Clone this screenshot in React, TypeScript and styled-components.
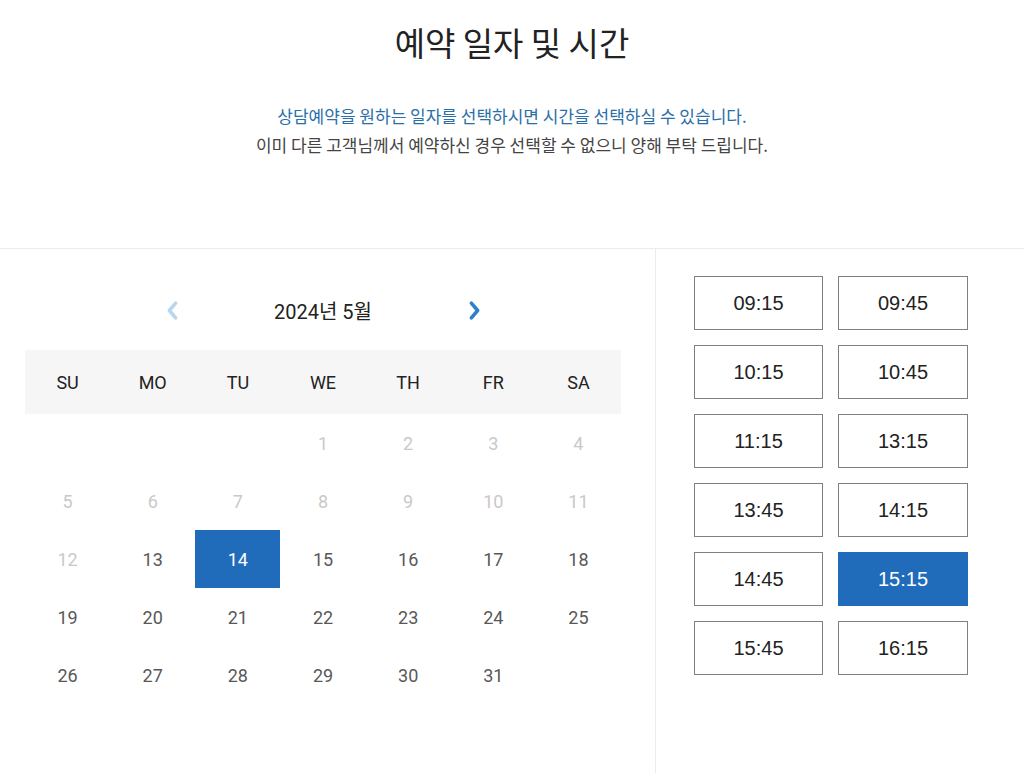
import React from "react";
import styled, { createGlobalStyle, css } from "styled-components";

const Global = createGlobalStyle`
  html, body { margin: 0; padding: 0; background: #fff; }
  body { font-family: "Noto Sans CJK KR", "Noto Sans", sans-serif; color: #222; }
  * { box-sizing: border-box; }
`;

const Page = styled.div`
  width: 1024px;
  height: 773px;
  overflow: hidden;
`;

const Intro = styled.header`
  height: 249px;
  padding-top: 18px;
  text-align: center;
  border-bottom: 1px solid #ececec;
`;

const Title = styled.h1`
  margin: 0;
  font-size: 33px;
  line-height: 48px;
  font-weight: 400;
  color: #222;
`;

const Lead = styled.p`
  margin: 35px 0 0;
  font-size: 17px;
  line-height: 29px;
  color: #444;
`;

const Accent = styled.span`
  color: #2a6fa8;
`;

const Main = styled.div`
  display: grid;
  grid-template-columns: 655px 1fr;
  height: 524px;
`;

const CalendarPane = styled.section`
  padding: 41px 0 0 25px;
`;

const Calendar = styled.div`
  width: 596px;
`;

const Nav = styled.div`
  display: flex;
  align-items: center;
  justify-content: center;
  height: 40px;
  margin-bottom: 20px;
`;

const Arrow = styled.button<{ $dim?: boolean }>`
  width: 20px;
  height: 24px;
  padding: 0;
  border: 0;
  background: none;
  display: flex;
  align-items: center;
  justify-content: center;
  color: ${(p) => (p.$dim ? "#b9d6f0" : "#2f80cc")};
`;

const Month = styled.div`
  width: 282px;
  text-align: center;
  font-family: Roboto, "Noto Sans CJK KR", sans-serif;
  font-size: 20px;
  color: #222;
`;

const Grid = styled.div`
  display: grid;
  grid-template-columns: repeat(7, 1fr);
`;

const HeadRow = styled(Grid)`
  height: 64px;
  background: #f6f6f6;
`;

const HeadCell = styled.div`
  display: flex;
  align-items: center;
  justify-content: center;
  font-family: Roboto, sans-serif;
  font-size: 18px;
  color: #222;
`;

const Day = styled.div<{ $muted?: boolean; $selected?: boolean }>`
  height: 58px;
  display: flex;
  align-items: center;
  justify-content: center;
  font-family: Roboto, sans-serif;
  font-size: 18px;
  color: ${(p) => (p.$muted ? "#c9c9c9" : "#585858")};
  ${(p) =>
    p.$selected &&
    css`
      background: #216bbb;
      color: #fff;
    `}
`;

const TimePane = styled.section`
  border-left: 1px solid #ececec;
  padding: 27px 0 0 38px;
`;

const Times = styled.div`
  display: grid;
  grid-template-columns: 129px 130px;
  column-gap: 15px;
  row-gap: 15px;
`;

const Slot = styled.button<{ $selected?: boolean }>`
  height: 54px;
  border: 1px solid #808080;
  background: #fff;
  font-family: "Liberation Sans", Arial, sans-serif;
  font-size: 20px;
  color: #222;
  padding: 0;
  ${(p) =>
    p.$selected &&
    css`
      background: #216bbb;
      border-color: #216bbb;
      color: #fff;
    `}
`;

const Chevron = ({ dir }: { dir: "left" | "right" }) => (
  <svg width="15" height="21" viewBox="0 0 14 20">
    <path
      d={dir === "left" ? "M10 3 L4 10 L10 17" : "M4 3 L10 10 L4 17"}
      fill="none"
      stroke="currentColor"
      strokeWidth="3.4"
      strokeLinecap="round"
      strokeLinejoin="round"
    />
  </svg>
);

const heads = ["SU", "MO", "TU", "WE", "TH", "FR", "SA"];
const times = ["09:15", "09:45", "10:15", "10:45", "11:15", "13:15", "13:45", "14:15", "14:45", "15:15", "15:45", "16:15"];

export default function App() {
  const cells: { n: number | null; muted: boolean }[] = [];
  for (let i = 0; i < 3; i++) cells.push({ n: null, muted: true });
  for (let d = 1; d <= 31; d++) cells.push({ n: d, muted: d < 13 });
  return (
    <Page>
      <Global />
      <Intro>
        <Title>예약 일자 및 시간</Title>
        <Lead>
          <Accent>상담예약을 원하는 일자를 선택하시면 시간을 선택하실 수 있습니다.</Accent>
          <br />
          이미 다른 고객님께서 예약하신 경우 선택할 수 없으니 양해 부탁 드립니다.
        </Lead>
      </Intro>
      <Main>
        <CalendarPane>
          <Calendar>
            <Nav>
              <Arrow $dim aria-label="이전 달">
                <Chevron dir="left" />
              </Arrow>
              <Month>2024년 5월</Month>
              <Arrow aria-label="다음 달">
                <Chevron dir="right" />
              </Arrow>
            </Nav>
            <HeadRow>
              {heads.map((h) => (
                <HeadCell key={h}>{h}</HeadCell>
              ))}
            </HeadRow>
            <Grid>
              {cells.map((c, i) => (
                <Day key={i} $muted={c.muted} $selected={c.n === 14}>
                  {c.n ?? ""}
                </Day>
              ))}
            </Grid>
          </Calendar>
        </CalendarPane>
        <TimePane>
          <Times>
            {times.map((t) => (
              <Slot key={t} $selected={t === "15:15"}>
                {t}
              </Slot>
            ))}
          </Times>
        </TimePane>
      </Main>
    </Page>
  );
}
